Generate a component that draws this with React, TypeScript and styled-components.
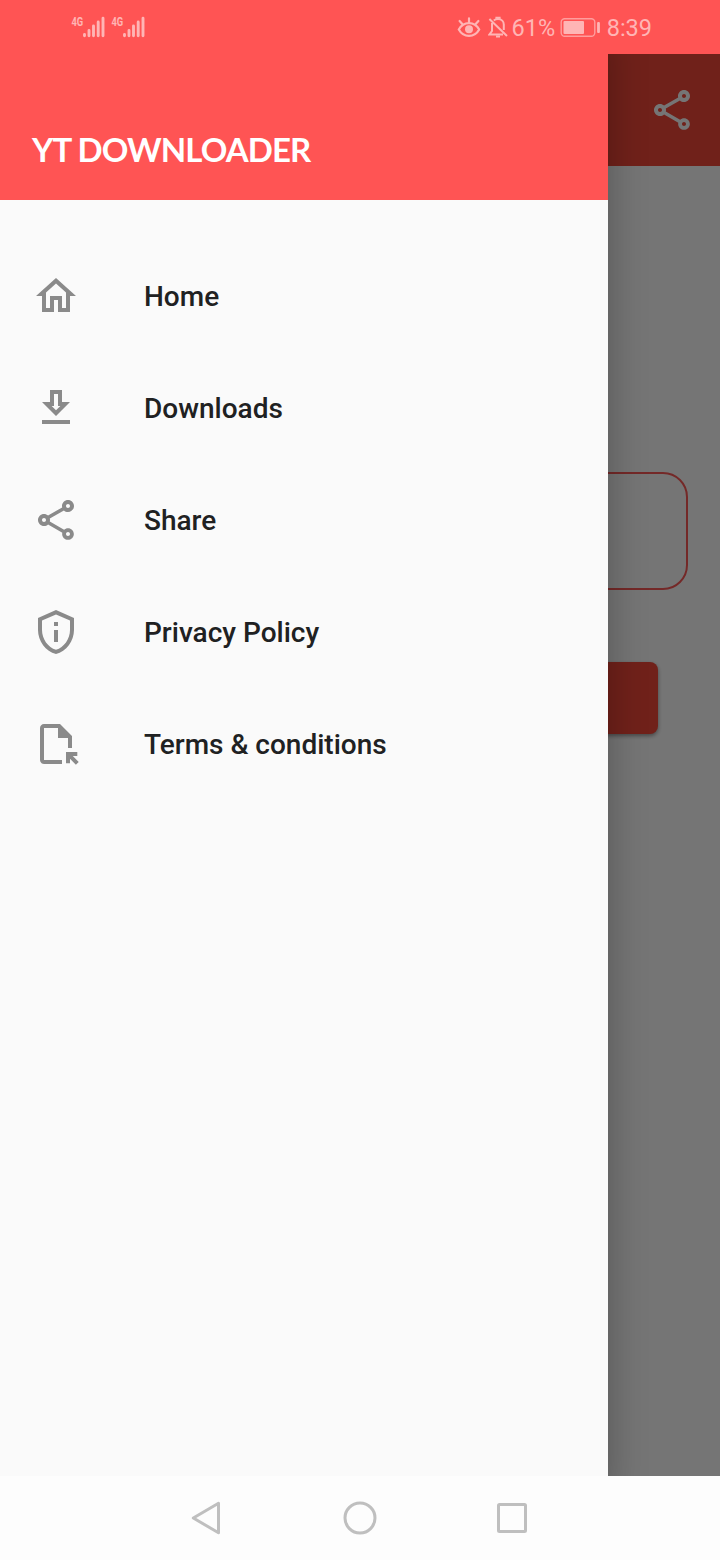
import React from 'react';
import styled, { createGlobalStyle } from 'styled-components';

const GlobalStyle = createGlobalStyle`
  * { box-sizing: border-box; }
  body { margin: 0; font-family: Roboto, sans-serif; }
`;

const Screen = styled.div`
  display: flex;
  flex-direction: column;
  width: 720px;
  height: 1560px;
  overflow: hidden;
  background: #fff;
`;

const StatusBar = styled.header`
  display: flex;
  justify-content: space-between;
  height: 54px;
  padding: 0 68px 0 70px;
  background: #ff5454;
  color: #ffb5b5;
`;

const StatusGroup = styled.div`
  display: flex;
  align-items: center;
`;

const StatusText = styled.span`
  padding-top: 2px;
  font-size: 23.5px;
  line-height: 28px;
`;

const Network = styled.div`
  display: flex;
  width: 40px;
  height: 54px;
  padding-top: 15px;
`;

const NetworkLabel = styled.span`
  width: 13px;
  padding-left: 2px;
  font: 700 13px/13px Roboto, sans-serif;
  transform: scaleX(0.72);
  transform-origin: left top;
`;

const Glyph = styled.svg<{ $gap?: number }>`
  display: block;
  flex: none;
  margin-right: ${(p) => p.$gap ?? 0}px;
`;

const Body = styled.div`
  position: relative;
  flex: 1;
`;

const Page = styled.main`
  display: flex;
  flex-direction: column;
  height: 100%;
`;

const AppBar = styled.div`
  display: flex;
  align-items: center;
  justify-content: flex-end;
  height: 112px;
  padding-right: 24px;
  background: #f44839;
  color: #fff;
`;

const Form = styled.div`
  display: flex;
  flex-direction: column;
  padding: 306px 32px 0;
`;

const UrlField = styled.div`
  height: 118px;
  border: 2px solid #fc5a58;
  border-radius: 25px;
`;

const SubmitButton = styled.div`
  height: 72px;
  margin: 72px 30px 0;
  border-radius: 8px;
  background: #f44839;
  box-shadow: 0 2px 4px rgba(0, 0, 0, 0.4);
`;

const Scrim = styled.div`
  position: absolute;
  inset: 0;
  background: rgba(0, 0, 0, 0.54);
`;

const Drawer = styled.aside`
  position: absolute;
  inset: 0 auto 0 0;
  width: 608px;
  background: #fafafa;
  box-shadow: -20px 0 36px 20px rgba(0, 0, 0, 0.28);
  clip-path: inset(0 -112px 0 0);
`;

const DrawerHeader = styled.div`
  height: 146px;
  padding: 73px 32px 0;
  background: #ff5454;
`;

const Title = styled.h1`
  margin: 0;
  color: #fff;
  font: 700 33px/44px Lato, sans-serif;
  letter-spacing: -0.9px;
  white-space: nowrap;
`;

const Menu = styled.nav`
  display: flex;
  flex-direction: column;
  padding-top: 40px;
`;

const MenuItem = styled.div`
  display: flex;
  align-items: center;
  gap: 64px;
  height: 112px;
  padding-left: 32px;
  color: #8a8a8a;
`;

const MenuLabel = styled.span`
  padding-top: 2px;
  color: #202122;
  font-size: 28px;
  font-weight: 500;
  line-height: 40px;
  white-space: nowrap;
`;

const NavigationBar = styled.footer`
  display: flex;
  align-items: center;
  justify-content: center;
  gap: 104px;
  height: 84px;
  background: #fdfdfd;
`;

const SHARE =
  'M18 16.08c-.76 0-1.44.3-1.96.77L8.91 12.7c.05-.23.09-.46.09-.7s-.04-.47-.09-.7l7.05-4.11c.54.5 1.25.81 2.04.81 1.66 0 3-1.34 3-3s-1.34-3-3-3-3 1.34-3 3c0 .24.04.47.09.7L8.04 9.81C7.5 9.31 6.79 9 6 9c-1.66 0-3 1.34-3 3s1.34 3 3 3c.79 0 1.5-.31 2.04-.81l7.12 4.16c-.05.21-.08.43-.08.65 0 1.61 1.31 2.92 2.92 2.92s2.92-1.31 2.92-2.92-1.31-2.92-2.92-2.92zM18 4c.55 0 1 .45 1 1s-.45 1-1 1-1-.45-1-1 .45-1 1-1zM6 13c-.55 0-1-.45-1-1s.45-1 1-1 1 .45 1 1-.45 1-1 1zm12 7.02c-.55 0-1-.45-1-1s.45-1 1-1 1 .45 1 1-.45 1-1 1z';

const items = [
  {
    label: 'Home',
    icon: 'M12 5.69l5 4.5V18h-2v-6H9v6H7v-7.81l5-4.5M12 3L2 12h3v8h6v-6h2v6h6v-8h3L12 3z',
  },
  {
    label: 'Downloads',
    icon: 'M13 5v6h1.17L12 13.17 9.83 11H11V5h2m2-2H9v6H5l7 7 7-7h-4V3zm4 15H5v2h14v-2z',
  },
  { label: 'Share', icon: SHARE },
  {
    label: 'Privacy Policy',
    icon: 'M12 3.19l7 3.11V11c0 4.52-2.98 8.69-7 9.93-4.02-1.24-7-5.41-7-9.93V6.3l7-3.11M12 1L3 5v6c0 5.55 3.84 10.74 9 12 5.16-1.26 9-6.45 9-12V5l-9-4zM11 7h2v2h-2V7zm0 4h2v6h-2v-6z',
  },
  {
    label: 'Terms & conditions',
    icon: 'M14 2H6c-1.1 0-2 .9-2 2v16c0 1.1.9 2 2 2h9v-2H6V4h7v5h5v5h2V8l-6-6zM19 21.66v-2.24l2.95 2.95 1.41-1.41L20.41 18h2.24v-2H17v5.66h2z',
  },
];

const MaterialIcon = ({ d }: { d: string }) => (
  <Glyph width="48" height="48" viewBox="0 0 24 24" fill="currentColor">
    <path d={d} />
  </Glyph>
);

const Signal = () => (
  <Network>
    <NetworkLabel>4G</NetworkLabel>
    <Glyph width="22" height="24" viewBox="0 0 22 24" stroke="currentColor" strokeWidth="2.9" strokeLinecap="round">
      <path d="M1.5 19.5v1.3M6 15.5v5.3M10.5 11v9.8M15.2 7v13.8M20 3.3v17.5" />
    </Glyph>
  </Network>
);

export default function App() {
  return (
    <Screen>
      <GlobalStyle />
      <StatusBar>
        <StatusGroup>
          <Signal />
          <Signal />
        </StatusGroup>
        <StatusGroup>
          <Glyph $gap={7} width="24" height="24" viewBox="0 0 24 24" fill="none" stroke="currentColor" strokeWidth="2.2" strokeLinecap="round">
            <path d="M1.8 14.5C6.5 6 17.5 6 22.2 14.5C17.5 23 6.5 23 1.8 14.5ZM12 7.5V3.4M5.3 9L2.6 6M18.7 9l2.7-3" />
            <circle cx="12" cy="14.2" r="4" fill="currentColor" stroke="none" />
          </Glyph>
          <Glyph $gap={3.5} width="20" height="24" viewBox="0 0 20 24" fill="none" stroke="currentColor" strokeWidth="2">
            <path d="M1.4 4L19 21M4 8V16L1.5 19.4H15M5.8 5.4C7.2 4.2 8.4 4 10 4C13.6 4 15.8 6.6 15.8 9.6V15" />
            <path d="M8.4 3.7V2.7h3.2v1M8 21.6h4" />
          </Glyph>
          <StatusText>61%</StatusText>
          <Glyph width="51.5" height="24" viewBox="0 0 51.5 24">
            <rect x="6.2" y="3.7" width="33.6" height="17.6" rx="3.5" fill="none" stroke="currentColor" strokeWidth="1.4" opacity=".75" />
            <rect x="8.5" y="6" width="20.5" height="13" rx="1" fill="currentColor" />
            <rect x="42.1" y="7" width="2.8" height="11" rx="1" fill="currentColor" />
          </Glyph>
          <StatusText>8:39</StatusText>
        </StatusGroup>
      </StatusBar>
      <Body>
        <Page>
          <AppBar>
            <MaterialIcon d={SHARE} />
          </AppBar>
          <Form>
            <UrlField />
            <SubmitButton />
          </Form>
        </Page>
        <Scrim />
        <Drawer>
          <DrawerHeader>
            <Title>YT DOWNLOADER</Title>
          </DrawerHeader>
          <Menu>
            {items.map((item) => (
              <MenuItem key={item.label}>
                <MaterialIcon d={item.icon} />
                <MenuLabel>{item.label}</MenuLabel>
              </MenuItem>
            ))}
          </Menu>
        </Drawer>
      </Body>
      <NavigationBar>
        <Glyph width="48" height="48" viewBox="0 0 48 48" fill="none" stroke="#bfbfbf" strokeWidth="3" strokeLinejoin="round">
          <path d="M9.3 24L34.5 9.2V38.8Z" />
        </Glyph>
        <Glyph width="48" height="48" viewBox="0 0 48 48" fill="none" stroke="#bfbfbf" strokeWidth="3">
          <circle cx="24" cy="24" r="15" />
        </Glyph>
        <Glyph width="48" height="48" viewBox="0 0 48 48" fill="none" stroke="#bfbfbf" strokeWidth="3">
          <rect x="10.5" y="10.5" width="27" height="27" rx="1" />
        </Glyph>
      </NavigationBar>
    </Screen>
  );
}
